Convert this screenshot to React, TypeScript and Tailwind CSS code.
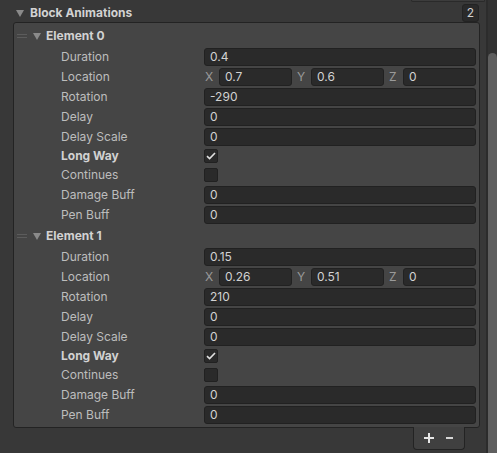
import React from "react";

const font = { fontFamily: "Inter, 'Noto Sans', sans-serif" };

function Tri() {
  return (
    <svg width="8" height="7" viewBox="0 0 8 7" className="shrink-0">
      <path d="M0 0 L8 0 L4 7 Z" fill="#8a8a8a" />
    </svg>
  );
}

function Handle() {
  return (
    <div className="flex w-[10px] shrink-0 flex-col gap-[2px]">
      <div className="h-[1px] bg-[#5c5c5c]" />
      <div className="h-[1px] bg-[#5c5c5c]" />
    </div>
  );
}

function Field({ value, className = "" }: { value: string; className?: string }) {
  return (
    <div
      className={
        "flex h-[18px] items-center rounded-[3px] border border-[#212121] bg-[#2a2a2a] px-[5px] text-[12px] text-[#d2d2d2] " +
        className
      }
    >
      {value}
    </div>
  );
}

function Label({ text, bold }: { text: string; bold?: boolean }) {
  return (
    <div
      className={
        "w-[190px] shrink-0 pl-[47px] text-[12px] " +
        (bold ? "font-bold text-[#d2d2d2]" : "text-[#bdbdbd]")
      }
    >
      {text}
    </div>
  );
}

function FieldRow({ label, value }: { label: string; value: string }) {
  return (
    <div className="flex h-[20px] items-center pr-[3px]">
      <Label text={label} />
      <Field value={value} className="flex-1" />
    </div>
  );
}

function VecRow({ x, y, z }: { x: string; y: string; z: string }) {
  const parts: [string, string][] = [
    ["X", x],
    ["Y", y],
    ["Z", z],
  ];
  return (
    <div className="flex h-[20px] items-center pr-[3px]">
      <Label text="Location" />
      <div className="grid flex-1 grid-cols-3 gap-[4px]">
        {parts.map(([l, v]) => (
          <div key={l} className="flex items-center">
            <div className="w-[15px] shrink-0 pl-[1px] text-[12px] text-[#9a9a9a]">{l}</div>
            <Field value={v} className="flex-1" />
          </div>
        ))}
      </div>
    </div>
  );
}

function CheckRow({ label, checked, bold }: { label: string; checked: boolean; bold?: boolean }) {
  return (
    <div className="h-[19px] pr-[3px]">
      <div className="flex h-[18px] items-center">
        <Label text={label} bold={bold} />
        <div className="flex h-[14px] w-[14px] items-center justify-center rounded-[2px] border border-[#212121] bg-[#2a2a2a]">
          {checked && (
            <svg width="10" height="8" viewBox="0 0 10 8">
              <path d="M1 4.2 L3.6 6.6 L9 1" stroke="#e0e0e0" strokeWidth="1.6" fill="none" />
            </svg>
          )}
        </div>
      </div>
    </div>
  );
}

function Element({
  idx,
  d,
  x,
  y,
  z,
  rot,
}: {
  idx: number;
  d: string;
  x: string;
  y: string;
  z: string;
  rot: string;
}) {
  return (
    <div className="flex flex-col">
      <div className="flex h-[22px] items-center pl-[3px]">
        <Handle />
        <div className="ml-[6px]">
          <Tri />
        </div>
        <div className="ml-[5px] text-[12px] font-bold text-[#d2d2d2]">Element {idx}</div>
      </div>
      <FieldRow label="Duration" value={d} />
      <VecRow x={x} y={y} z={z} />
      <FieldRow label="Rotation" value={rot} />
      <FieldRow label="Delay" value="0" />
      <FieldRow label="Delay Scale" value="0" />
      <CheckRow label="Long Way" checked bold />
      <CheckRow label="Continues" checked={false} />
      <FieldRow label="Damage Buff" value="0" />
      <FieldRow label="Pen Buff" value="0" />
    </div>
  );
}

export default function App() {
  return (
    <div className="flex h-[453px] w-[497px] overflow-hidden bg-[#383838]" style={font}>
      <div className="flex w-[486px] flex-col">
        <div className="flex h-[2px] justify-end pr-[1px]">
          <div className="h-[2px] w-[74px] rounded-b-[3px] border-x border-b border-[#2a2a2a] bg-[#3c3c3c]" />
        </div>
        <div className="flex h-[20px] items-end pr-[7px]">
          <div className="flex h-[18px] flex-1 items-center pl-[16px]">
            <Tri />
            <div className="ml-[6px] text-[12px] font-bold text-[#d2d2d2]">Block Animations</div>
          </div>
          <div className="flex h-[18px] w-[17px] items-center justify-center rounded-[3px] border border-[#232323] bg-[#2a2a2a] text-[12px] text-[#d2d2d2]">
            2
          </div>
        </div>
        <div className="ml-[13px] w-[467px] rounded-[3px] border border-[#232323] bg-[#454545] pb-[2px] pt-[2px]">
          <Element idx={0} d="0.4" x="0.7" y="0.6" z="0" rot="-290" />
          <Element idx={1} d="0.15" x="0.26" y="0.51" z="0" rot="210" />
        </div>
        <div className="flex justify-end pr-[21px]">
          <div className="-mt-[1px] flex h-[23px] w-[52px] items-center rounded-b-[4px] border-x border-b border-[#232323] bg-[#404040]">
            <svg width="10" height="10" viewBox="0 0 10 10" className="ml-[10px]">
              <path d="M5 0 V10 M0 5 H10" stroke="#e6e6e6" strokeWidth="2" />
            </svg>
            <svg width="7" height="2" viewBox="0 0 7 2" className="ml-[12px]">
              <path d="M0 1 H7" stroke="#d6d6d6" strokeWidth="2" />
            </svg>
          </div>
        </div>
      </div>
      <div className="flex w-[11px] bg-[#323232]">
        <div className="w-[2px] bg-[#2c2c2c]" />
        <div className="flex flex-1 flex-col">
          <div className="h-[53px]" />
          <div className="flex-1 rounded-t-[5px] bg-[#5f5f5f]" />
        </div>
      </div>
    </div>
  );
}
